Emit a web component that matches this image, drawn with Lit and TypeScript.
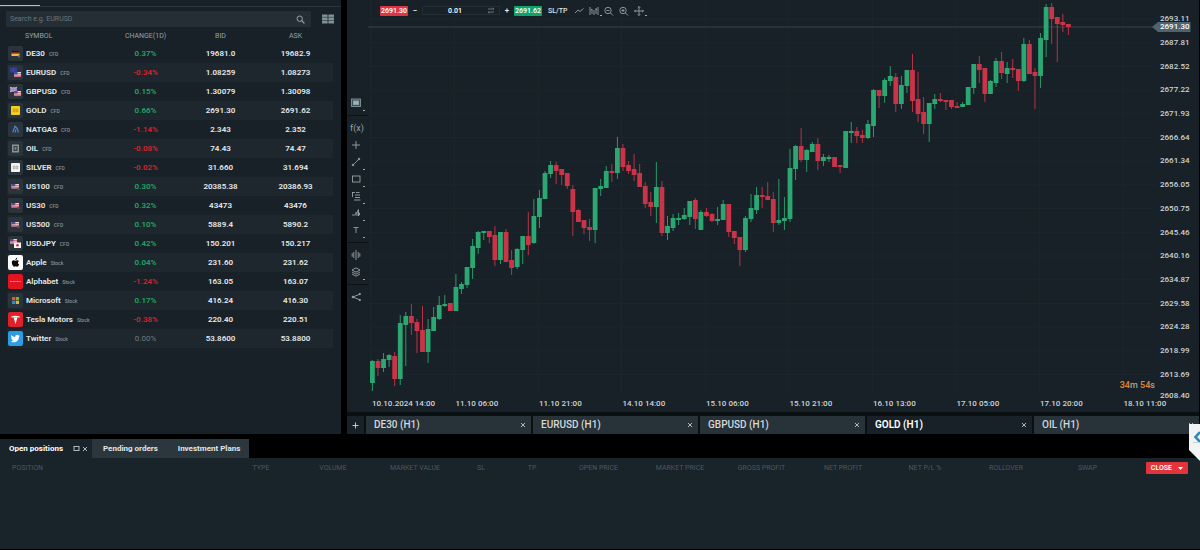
import { LitElement, html, svg, css, TemplateResult } from "lit";
import { customElement, state } from "lit/decorators.js";
import { classMap } from "lit/directives/class-map.js";

type Candle = [string, number, number, number, number];

// Hourly candles: direction, body top, body bottom, wick top, wick bottom.
const CANDLES: Candle[] = [
  ["g", 361, 383, 360, 391], ["r", 361, 368, 359, 376], ["g", 359, 368, 353, 372], ["g", 355, 360, 354, 367],
  ["r", 356, 379, 352, 386], ["g", 323, 379, 315, 385], ["g", 316, 325, 312, 366], ["r", 316, 323, 304, 335],
  ["r", 322, 331, 319, 353], ["r", 330, 352, 306, 352], ["g", 329, 352, 319, 363], ["g", 317, 331, 307, 331],
  ["g", 305, 319, 296, 320], ["g", 304, 306, 295, 307], ["r", 303, 311, 303, 311], ["g", 287, 311, 274, 311],
  ["g", 284, 289, 282, 294], ["g", 267, 285, 267, 288], ["g", 246, 268, 239, 279], ["g", 232, 248, 231, 254],
  ["g", 231, 233, 231, 240], ["r", 231, 237, 231, 243], ["r", 235, 260, 226, 266], ["g", 232, 260, 232, 264],
  ["r", 232, 262, 229, 262], ["r", 260, 268, 250, 275], ["g", 249, 267, 248, 269], ["g", 236, 250, 236, 264],
  ["r", 236, 245, 212, 255], ["g", 216, 243, 199, 244], ["g", 198, 217, 190, 228], ["g", 173, 199, 171, 199],
  ["g", 165, 174, 161, 178], ["r", 165, 171, 162, 184], ["r", 169, 175, 169, 185], ["r", 173, 186, 173, 189],
  ["r", 189, 212, 185, 236], ["r", 210, 222, 209, 222], ["r", 220, 228, 220, 234], ["r", 227, 230, 219, 241],
  ["g", 188, 230, 188, 243], ["g", 186, 189, 179, 196], ["g", 171, 188, 166, 188], ["r", 171, 173, 164, 182],
  ["g", 148, 173, 137, 179], ["r", 148, 167, 144, 171], ["r", 165, 171, 161, 174], ["r", 169, 175, 154, 181],
  ["r", 173, 187, 164, 187], ["r", 186, 204, 182, 208], ["r", 202, 207, 192, 216], ["g", 187, 207, 162, 223],
  ["r", 187, 233, 181, 236], ["g", 226, 233, 216, 240], ["g", 218, 228, 214, 231], ["g", 218, 220, 213, 225],
  ["g", 215, 219, 208, 220], ["g", 201, 217, 201, 225], ["r", 200, 219, 198, 229], ["g", 212, 230, 210, 230],
  ["r", 212, 216, 208, 217], ["r", 214, 221, 213, 222], ["g", 219, 221, 207, 225], ["g", 204, 220, 200, 220],
  ["r", 204, 232, 204, 237], ["r", 231, 238, 231, 244], ["r", 237, 250, 237, 266], ["g", 218, 250, 216, 252],
  ["g", 208, 219, 194, 222], ["g", 195, 210, 187, 214], ["r", 195, 197, 187, 208], ["r", 196, 200, 182, 200],
  ["r", 199, 223, 192, 232], ["g", 220, 223, 179, 225], ["g", 218, 221, 197, 230], ["g", 168, 219, 149, 222],
  ["g", 146, 169, 145, 180], ["r", 146, 160, 128, 162], ["g", 150, 160, 149, 172], ["g", 144, 152, 142, 152],
  ["r", 144, 161, 138, 170], ["g", 157, 161, 154, 166], ["g", 157, 159, 155, 162], ["r", 157, 167, 157, 167],
  ["r", 165, 167, 165, 173], ["g", 131, 168, 131, 168], ["g", 131, 133, 122, 143], ["r", 131, 136, 127, 143],
  ["r", 135, 138, 130, 143], ["g", 124, 138, 120, 139], ["g", 90, 126, 89, 137], ["r", 90, 96, 90, 108],
  ["g", 80, 96, 78, 103], ["g", 76, 81, 66, 86], ["r", 77, 104, 73, 112], ["g", 85, 104, 76, 109],
  ["g", 70, 86, 70, 93], ["r", 70, 101, 54, 112], ["r", 99, 114, 72, 122], ["r", 112, 124, 97, 134],
  ["g", 103, 124, 103, 142], ["g", 99, 104, 94, 109], ["r", 99, 101, 93, 102], ["r", 100, 102, 100, 110],
  ["r", 100, 107, 100, 109], ["r", 106, 108, 102, 108], ["g", 104, 107, 102, 107], ["g", 87, 105, 87, 105],
  ["g", 64, 88, 64, 94], ["r", 64, 70, 56, 83], ["r", 68, 94, 68, 102], ["g", 81, 94, 80, 94],
  ["g", 61, 83, 58, 87], ["r", 61, 73, 52, 79], ["g", 68, 74, 62, 83], ["r", 68, 70, 59, 78],
  ["r", 69, 81, 69, 91], ["g", 44, 81, 38, 82], ["r", 44, 74, 40, 74], ["r", 72, 76, 68, 109],
  ["g", 38, 76, 33, 88], ["g", 7, 40, 4, 57], ["r", 7, 19, 3, 44], ["r", 17, 24, 17, 62],
  ["r", 22, 25, 14, 32], ["r", 24, 27, 24, 35],
];

const STEP = 5.568;
const FIRST = 4.4;

const PRICES = [
  "2693.11", "2687.81", "2682.52", "2677.22", "2671.93", "2666.64", "2661.34", "2656.05", "2650.75",
  "2645.46", "2640.16", "2634.87", "2629.58", "2624.28", "2618.99", "2613.69",
];

const TIMES = [
  "10.10.2024 14:00", "11.10 06:00", "11.10 21:00", "14.10 14:00", "15.10 06:00",
  "15.10 21:00", "16.10 13:00", "17.10 05:00", "17.10 20:00", "18.10 11:00",
];

const usFlag = (x: number, y: number, w: number, h: number) => svg`
  <rect x=${x} y=${y} width=${w} height=${h} fill="#e9dfe6"/>
  <path d="M${x} ${y + 1.4}h${w}M${x} ${y + 3.2}h${w}M${x} ${y + h - 0.4}h${w}" stroke="#c8465a" stroke-width=".8"/>
  <rect x=${x} y=${y} width=${w / 2} height=${h / 2} fill="#4a4c94"/>`;

const box = "#2a343b";
const LOGOS: Record<string, { bg: string; art: TemplateResult }> = {
  de: { bg: box, art: svg`<path d="M4 5h7v2H4z" fill="#14161a"/><path d="M3.500 6.500h8v1.800h-8z" fill="#d8402e"/><path d="M3.500 8h8v2h-8z" fill="#f0b64a"/><circle cx="11" cy="10.500" r="1.200" fill="#55606a"/>` },
  eurusd: { bg: box, art: svg`<path d="M2 2.500h7v5H2z" fill="#343a9c"/><path d="M5.500 3.300v3.400M3.800 5h3.400" stroke="#5d5fae" stroke-width=".7" stroke-dasharray=".8 .8"/>${usFlag(6, 7, 7, 5)}` },
  gbpusd: { bg: box, art: svg`<path d="M2 3h7v5H2z" fill="#8a7cb4"/><path d="M2 3l7 5M9 3l-7 5" stroke="#d3c2d8" stroke-width=".9"/><path d="M5.500 3v5M2 5.500h7" stroke="#cf7f9c" stroke-width="1.200"/>${usFlag(6, 7, 7, 5)}` },
  gold: { bg: box, art: svg`<rect x="3" y="3" width="9" height="9" rx=".8" fill="#f3cf1d"/><path d="M5.200 6.200h1.800v2.400H5.200zM8.200 6.200h1.600v2.400H8.200z" fill="none" stroke="#b48c12" stroke-width=".7"/>` },
  gas: { bg: box, art: svg`<path d="M5 10.500C4.700 7.800 6.600 7.200 7 4.300c2 1.600 3.400 3.700 3 6.200M7.500 10.500c-.4-1.500.2-2.300.3-3" fill="none" stroke="#4d83c8" stroke-width="1.300"/>` },
  oil: { bg: box, art: svg`<rect x="4" y="3.500" width="7" height="8" fill="#8b9397"/><rect x="5.500" y="5" width="4" height="5" fill="#343d43"/><rect x="6.600" y="6.200" width="1.800" height="2.400" fill="#8b9397"/>` },
  silver: { bg: box, art: svg`<rect x="3" y="3" width="9" height="9" rx=".8" fill="#f1f1ef"/><path d="M5.200 6.200h1.800v2.400H5.200zM8.200 6.200h1.600v2.400H8.200z" fill="none" stroke="#9b9b98" stroke-width=".7"/>` },
  us: { bg: box, art: svg`${usFlag(3.5, 5, 7.5, 4.5)}<circle cx="10.500" cy="10" r="1.300" fill="#6b4a50"/>` },
  usdjpy: { bg: box, art: svg`${usFlag(2, 3, 7, 5)}<path d="M6 6.500h7v5.500H6z" fill="#f4f1f2"/><circle cx="9.500" cy="9.200" r="1.300" fill="#cf2f3c"/>` },
  apple: { bg: "#fcfcfc", art: svg`<path d="M9.300 5.200c-.8 0-1.200.5-1.800.5s-1.100-.5-1.900-.4C4.600 5.400 3.800 6.200 3.800 7.600c0 1.900 1.300 4.100 2.300 4.100.6 0 .8-.4 1.500-.4s.9.400 1.500.4c.9 0 1.700-1.500 2-2.300-1.500-.7-1.500-2.700-.1-3.400-.4-.5-1-.8-1.700-.8zM7.400 5c0-1.200.8-2 1.800-2.200C9.300 4 8.500 4.900 7.400 5z" fill="#0b0b0c"/>` },
  alphabet: { bg: "#e3131f", art: svg`<path d="M2 7.500h11" stroke="#f59aa0" stroke-width="1.200" stroke-dasharray="1 .4"/>` },
  microsoft: { bg: box, art: svg`<path d="M4 4h3.200v3.200H4z" fill="#d95a33"/><path d="M7.800 4H11v3.200H7.800z" fill="#7cae35"/><path d="M4 7.800h3.200V11H4z" fill="#2b8ec9"/><path d="M7.800 7.800H11V11H7.800z" fill="#e6b12c"/>` },
  tesla: { bg: "#e0202a", art: svg`<path d="M3.200 4.400c2.600-1 6-1 8.600 0l-.5 1.300c-.7-.3-1.200-.4-1.900-.4L7.500 12.200 5.600 5.300c-.7 0-1.200.1-1.900.4z" fill="#fff"/><path d="M6.700 5.200l.8.900.8-.9" fill="none" stroke="#e0202a" stroke-width=".6"/>` },
  twitter: { bg: "#2b9de3", art: svg`<path d="M12 4.700c-.3.200-.7.300-1.100.3.400-.2.700-.6.800-1-.4.200-.8.400-1.200.4a1.900 1.900 0 0 0-3.200 1.700C5.700 6 4.300 5.300 3.400 4.100c-.5.900-.3 2 .6 2.500-.3 0-.6-.1-.9-.2 0 .9.700 1.700 1.500 1.900-.3.100-.6.100-.8 0 .2.800.9 1.300 1.700 1.300-.8.600-1.700.9-2.700.8 3.300 2.100 8.200.4 8.200-4.600.4-.3.700-.6 1-1.100z" fill="#fff"/>` },
};

interface Quote { logo: string; name: string; kind: string; change: string; bid: string; ask: string; }
const q = (logo: string, name: string, kind: string, change: string, bid: string, ask: string): Quote =>
  ({ logo, name, kind, change, bid, ask });

const QUOTES: Quote[] = [
  q("de", "DE30", "CFD", "0.37%", "19681.0", "19682.9"),
  q("eurusd", "EURUSD", "CFD", "-0.34%", "1.08259", "1.08273"),
  q("gbpusd", "GBPUSD", "CFD", "0.15%", "1.30079", "1.30098"),
  q("gold", "GOLD", "CFD", "0.66%", "2691.30", "2691.62"),
  q("gas", "NATGAS", "CFD", "-1.14%", "2.343", "2.352"),
  q("oil", "OIL", "CFD", "-0.08%", "74.43", "74.47"),
  q("silver", "SILVER", "CFD", "-0.02%", "31.660", "31.694"),
  q("us", "US100", "CFD", "0.30%", "20385.38", "20386.93"),
  q("us", "US30", "CFD", "0.32%", "43473", "43476"),
  q("us", "US500", "CFD", "0.10%", "5889.4", "5890.2"),
  q("usdjpy", "USDJPY", "CFD", "0.42%", "150.201", "150.217"),
  q("apple", "Apple", "Stock", "0.04%", "231.60", "231.62"),
  q("alphabet", "Alphabet", "Stock", "-1.24%", "163.05", "163.07"),
  q("microsoft", "Microsoft", "Stock", "0.17%", "416.24", "416.30"),
  q("tesla", "Tesla Motors", "Stock", "-0.38%", "220.40", "220.51"),
  q("twitter", "Twitter", "Stock", "0.00%", "53.8600", "53.8800"),
];

@customElement("watch-list")
export class WatchList extends LitElement {
  static styles = css`
    :host { display: flex; flex-direction: column; background: #172127; color: #e6eaec; }
    .tabs { height: 7px; border-bottom: 1px solid #2b353b; box-sizing: border-box; }
    .current { width: 40px; height: 6px; border-bottom: 1px solid #b4babd; box-sizing: border-box; }
    .find { display: flex; align-items: center; gap: 11px; padding: 4px 7px 0 6px; }
    .search { flex: 1; display: flex; align-items: center; height: 16px; background: #252e34; padding-right: 6px; }
    .search input { flex: 1; min-width: 0; border: 0; background: none; outline: none; padding: 0 4px; font: 7px Roboto, sans-serif; color: #dde2e4; }
    .search input::placeholder { color: #6c767c; opacity: 1; }
    button { border: 0; background: none; padding: 0; display: flex; }
    table { border-collapse: collapse; table-layout: fixed; width: 326px; margin: 1px 8px 0 7px; }
    th { height: 16px; padding: 0; font-size: 7px; font-weight: 400; color: #98a1a6; text-align: center; }
    th:first-child { width: 31%; text-align: left; text-indent: 18px; }
    td { height: 19px; padding: 0; font-size: 8px; font-weight: 600; text-align: center; }
    td:first-child { text-align: left; }
    tbody tr:nth-child(even) { background: #1e272d; }
    .sym { display: flex; align-items: center; padding-left: 1px; }
    .logo { flex: none; margin-right: 3px; }
    .kind { font-size: 5px; font-weight: 500; color: #87929a; margin-left: 4px; }
    .up { color: #21a565; }
    .down { color: #d5242f; }
    .flat { color: #6f797f; font-weight: 400; }
  `;

  render() {
    return html`
      <div class="tabs"><div class="current"></div></div>
      <div class="find">
        <label class="search">
          <input type="text" aria-label="Search" placeholder="Search e.g. EURUSD" />
          <svg width="9" height="9" viewBox="0 0 9 9" fill="none" stroke="#9aa3a8"><circle cx="3.700" cy="3.700" r="2.700"/><path d="M5.700 5.700L8.400 8.400" stroke-width="1.300"/></svg>
        </label>
        <button aria-label="Tile view">
          <svg width="12" height="10" viewBox="0 0 12 10"><path d="M0 .5h5.600v9H0zM6.400.5H12v9H6.400z" fill="#7f9097"/><path d="M0 3.300h12M0 6.500h12" stroke="#34434b" stroke-width=".7"/></svg>
        </button>
      </div>
      <table>
        <thead><tr><th>SYMBOL</th><th>CHANGE(1D)</th><th>BID</th><th>ASK</th></tr></thead>
        <tbody>
          ${QUOTES.map((r) => html`<tr>
            <td><div class="sym">
              <svg class="logo" width="15" height="15" viewBox="0 0 15 15"><rect width="15" height="15" rx="2" fill=${LOGOS[r.logo].bg}/>${LOGOS[r.logo].art}</svg>
              ${r.name}<span class="kind">${r.kind}</span></div></td>
            <td class=${r.change === "0.00%" ? "flat" : r.change.startsWith("-") ? "down" : "up"}>${r.change}</td>
            <td>${r.bid}</td><td>${r.ask}</td>
          </tr>`)}
        </tbody>
      </table>`;
  }
}

interface Tool { label: string; art: TemplateResult; more?: boolean; gap?: boolean; }
const TOOLS: Tool[] = [
  { label: "Chart type", more: true, art: svg`<rect x="1.500" y="2" width="9" height="7.500" fill="#3b525b" stroke="#7f949c"/><rect x="3.500" y="4" width="5" height="3.500" fill="#9fb0b6"/>` },
  { label: "Indicators", gap: true, art: svg`<text x="0" y="9" font-size="9" fill="#98a2a7" stroke="none">f(x)</text>` },
  { label: "Crosshair", art: svg`<path d="M6 2v8M2 6h8"/>` },
  { label: "Trend line", more: true, art: svg`<path d="M3 9l6-6"/><circle cx="3" cy="9" r=".8" fill="#98a2a7"/><circle cx="9" cy="3" r=".8" fill="#98a2a7"/>` },
  { label: "Rectangle", more: true, art: svg`<rect x="2.500" y="3" width="7.500" height="6"/>` },
  { label: "Fibonacci", more: true, art: svg`<path d="M2 2.500h3M2.500 2v5M5 5h5M5 7.500h5M4 10h6.500M6 2.500h3.500"/>` },
  { label: "Shapes", more: true, art: svg`<path d="M2 8h3.500L8.500 2.500V9M5 6h4.500V8H6"/>` },
  { label: "Text", more: true, art: svg`<path d="M3.500 3.500h5M6 3.500V9"/>` },
  { label: "Objects", gap: true, art: svg`<path d="M6 1v10M3.800 3v6M8.200 3v6M2.200 4.200v3.600M9.800 4.200v3.600"/>` },
  { label: "Layers", more: true, art: svg`<path d="M6 1.800L10 4 6 6.200 2 4z"/><path d="M2 6l4 2.200L10 6M2 8l4 2.200L10 8"/>` },
  { label: "Share", gap: true, art: svg`<path d="M10 3L3 6l7 3"/><circle cx="3" cy="6" r=".9" fill="#98a2a7"/><circle cx="9.800" cy="3" r=".7" fill="#98a2a7"/><circle cx="9.800" cy="9" r=".7" fill="#98a2a7"/>` },
];

const TOP_TOOLS: Tool[] = [
  { label: "Line chart", art: svg`<path d="M2 8l3-3 2 1.500L10.500 3.500"/>` },
  { label: "Candles", more: true, art: svg`<path d="M2 2v8M10 2v8M4 4v5M8 3v6M6 5v5M3 4.500h1M8 4.500h1"/>` },
  { label: "Zoom out", art: svg`<circle cx="5" cy="5.500" r="3.200"/><path d="M7.400 7.900L10 10.500M3.500 5.500h3"/>` },
  { label: "Zoom in", art: svg`<circle cx="5" cy="5.500" r="3.200"/><path d="M7.400 7.900L10 10.500M3.500 5.500h3M5 4v3"/>` },
  { label: "Move", more: true, art: svg`<path d="M6 1.500v9M1.500 6h9M4.800 2.700L6 1.500l1.200 1.200M4.800 9.300L6 10.500l1.200-1.200M2.700 4.800L1.500 6l1.200 1.200M9.300 4.800L10.500 6 9.300 7.200"/>` },
];

@customElement("price-chart")
export class PriceChart extends LitElement {
  @state() private active = 3;

  static styles = css`
    :host { display: flex; flex-direction: column; min-width: 0; }
    button { border: 0; background: none; padding: 0; margin: 0; font: inherit; color: inherit; }
    .frame { flex: 1; min-height: 0; display: grid; grid-template: minmax(0, 1fr) 18px / 21px minmax(0, 1fr) 44px; background: #172127; }
    .tools { grid-area: 1 / 1 / 3 / 2; display: flex; flex-direction: column; padding-top: 94px; }
    .tool { position: relative; height: 17px; padding-left: 3px; display: flex; align-items: center; justify-content: flex-start; }
    .tool.gap { margin-top: 8px; }
    .tool.gap::before { content: ""; position: absolute; left: 0; right: 0; top: -4px; border-top: 1px solid #0c1216; }
    .more::after { content: ""; position: absolute; right: 3px; bottom: 0; width: 2px; height: 1px; background: #a0aaaf; }
    .icon { fill: none; stroke: #98a2a7; stroke-width: .9; overflow: visible; }
    .plot { grid-area: 1 / 2; width: 100%; height: 100%; overflow: hidden; }
    .trade { grid-area: 1 / 2; align-self: start; z-index: 1; display: flex; align-items: center; padding: 5px 0 0 12px; font-size: 7px; color: #dfe4e6; }
    .quote { width: 28px; height: 10px; border-radius: 1px; font-weight: 600; text-align: center; line-height: 10px; color: #fff; }
    .sell { background: #dc3545; }
    .buy { background: #0fa36b; }
    .step { width: 14px; font-size: 8px; font-weight: 700; text-align: center; line-height: 10px; }
    .volume { display: flex; align-items: center; width: 78px; height: 9px; border: 1px solid #232e34; box-sizing: border-box; }
    .volume input { width: 64px; border: 0; padding: 0; background: none; outline: none; font: 600 7px Roboto, sans-serif; color: #fff; text-align: center; }
    .sltp { margin: 0 6px; font-weight: 500; }
    .top-tool { position: relative; display: flex; padding: 0 3px 0 0; height: 11px; }
    .top-tool.more::after { right: 1px; }
    .axis { grid-area: 1 / 3 / 3 / 4; position: relative; display: flex; flex-direction: column; padding: 7px 0 7px 5px; font-size: 8px; font-weight: 500; color: #cfd4d6; }
    .price { flex: 1; display: flex; align-items: center; }
    .price.last { flex: none; height: 19px; }
    .tag { position: absolute; left: -3px; top: 22px; padding: 0 1px 0 8px; line-height: 10px; background: #4f626d; color: #fff; clip-path: polygon(0 50%, 6px 0, 100% 0, 100% 100%, 6px 100%); }
    .left { grid-area: 1 / 2; align-self: end; justify-self: end; z-index: 1; font-size: 9px; line-height: 10px; margin-bottom: 4px; font-weight: 500; color: #9ba5aa; }
    .left b { color: #e0842a; font-weight: 600; }
    .times { grid-area: 2 / 2 / 3 / 4; display: grid; grid-template-columns: repeat(10, minmax(0, 1fr)); align-items: center; padding: 1px 0 0 4px; margin-right: -8px; font-size: 8px; line-height: 10px; font-weight: 500; color: #cfd4d6; white-space: nowrap; }
    .tabs { display: flex; gap: 2px; padding-top: 4px; background: #0a0f12; }
    .add { width: 17px; height: 18px; background: #172127; display: grid; place-items: center; }
    .tab { flex: 1; display: flex; align-items: center; justify-content: space-between; padding: 0 4px 0 8px; height: 18px; background: #283239; color: #d3d8da; font-size: 10px; font-weight: 500; }
    .tab.on { background: #172127; color: #fff; font-weight: 600; }
    .pick { flex: 1; text-align: left; line-height: 18px; }
    .x { width: 8px; height: 8px; display: grid; place-items: center; }
  `;

  private tool(t: Tool, cls: string) {
    return html`<button class=${classMap({ [cls]: true, more: !!t.more, gap: !!t.gap })} aria-label=${t.label}>
      <svg class="icon" width="12" height="12" viewBox="0 0 12 12">${t.art}</svg></button>`;
  }

  render() {
    const names = ["DE30 (H1)", "EURUSD (H1)", "GBPUSD (H1)", "GOLD (H1)", "OIL (H1)"];
    return html`
      <div class="frame">
        <div class="tools">${TOOLS.map((t) => this.tool(t, "tool"))}</div>
        <svg class="plot" viewBox="0 0 787 394" preserveAspectRatio="none" role="img" aria-label="GOLD H1 candles">
          ${PRICES.map((_, i) => svg`<path d="M0 ${19 + i * 23.7}H787" stroke="#1c272d"/>`)}
          ${TIMES.map((_, i) => svg`<path d="M${3 + i * 83.55} 0V394" stroke="#1c272d"/>`)}
          <path d="M0 27H787" stroke="#37454c"/>
          ${CANDLES.map(([dir, top, bottom, high, low], i) => {
            const x = FIRST + i * STEP;
            const fill = dir === "g" ? "#2ba771" : "#cb3448";
            return svg`<path d="M${x} ${high}V${low}" stroke=${fill} stroke-width=".9"/>
              <rect x=${x - 2.4} y=${top} width="4.800" height=${bottom - top} fill=${fill}/>`;
          })}
        </svg>
        <div class="trade">
          <button class="quote sell">2691.30</button>
          <button class="step" aria-label="Less">−</button>
          <div class="volume">
            <input type="text" aria-label="Volume" value="0.01" />
            <svg width="8" height="7" viewBox="0 0 8 7" fill="none" stroke="#7f8a90" stroke-width=".8"><path d="M1 2h6L5.500.8M7 5H1l1.500 1.200"/></svg>
          </div>
          <button class="step" aria-label="More">+</button>
          <button class="quote buy">2691.62</button>
          <button class="sltp">SL/TP</button>
          ${TOP_TOOLS.map((t) => this.tool(t, "top-tool"))}
        </div>
        <div class="left"><b>34</b>m <b>54</b>s</div>
        <div class="axis">
          ${PRICES.map((p) => html`<div class="price">${p}</div>`)}
          <div class="price last">2608.40</div>
          <div class="tag">2691.30</div>
        </div>
        <div class="times">${TIMES.map((t) => html`<span>${t}</span>`)}</div>
      </div>
      <div class="tabs">
        <button class="add" aria-label="Add chart"><svg width="7" height="7" viewBox="0 0 7 7"><path d="M3.500.5v6M.5 3.500h6" stroke="#d3d8da" stroke-width=".9"/></svg></button>
        ${names.map((n, i) => html`<div class=${classMap({ tab: true, on: i === this.active })}>
          <button class="pick" @click=${() => (this.active = i)}>${n}</button>
          <button class="x" aria-label="Close ${n}"><svg width="6" height="6" viewBox="0 0 6 6"><path d="M1 1l4 4M5 1L1 5" stroke="#c3c9cc" stroke-width=".9"/></svg></button>
        </div>`)}
      </div>`;
  }
}

const COLUMNS: [string, number][] = [
  ["POSITION", 225], ["TYPE", 72], ["VOLUME", 72], ["MARKET VALUE", 92], ["SL", 40], ["TP", 62],
  ["OPEN PRICE", 71], ["MARKET PRICE", 92], ["GROSS PROFIT", 71], ["NET PROFIT", 92],
  ["NET P/L %", 72], ["ROLLOVER", 90], ["SWAP", 73],
];

@customElement("positions-panel")
export class PositionsPanel extends LitElement {
  static styles = css`
    :host { display: block; padding-top: 5px; }
    button { border: 0; background: none; padding: 0; margin: 0; font: inherit; color: inherit; }
    .tabs { display: flex; height: 19px; font-size: 8px; font-weight: 700; color: #e2e6e8; }
    .tab { display: flex; align-items: center; background: #2b363d; padding: 0 9px 0 11px; }
    .tab.on { background: #18232a; padding: 0 4px 0 9px; color: #fff; }
    .tab.on svg { margin-left: 2px; }
    .tab.on .max { margin-left: 10px; }
    .body { background: #18232a; min-height: 91px; margin-bottom: 1px; }
    table { width: 100%; border-collapse: collapse; table-layout: fixed; }
    th { height: 20px; padding: 0; font-size: 7px; font-weight: 400; color: #4d585f; white-space: nowrap; text-align: center; }
    th:first-child { text-align: left; text-indent: 12px; }
    th:last-child { text-align: right; padding-right: 12px; }
    .close { display: inline-flex; align-items: center; gap: 6px; height: 12px; padding: 0 5px; border-radius: 1px; background: #e2353b; color: #fff; font-weight: 600; }
  `;

  render() {
    return html`
      <div class="tabs">
        <button class="tab on">Open positions
          <svg class="max" width="7" height="7" viewBox="0 0 7 7"><rect x="1" y="1.500" width="5" height="4" fill="none" stroke="#c3c9cc" stroke-width=".9"/></svg>
          <svg width="6" height="6" viewBox="0 0 6 6"><path d="M1 1l4 4M5 1L1 5" stroke="#c3c9cc" stroke-width=".9"/></svg>
        </button>
        <button class="tab">Pending orders</button>
        <button class="tab">Investment Plans</button>
      </div>
      <div class="body">
        <table>
          <colgroup>${COLUMNS.map(([, w]) => html`<col style="width:${w / 12}%" />`)}<col /></colgroup>
          <thead><tr>
            ${COLUMNS.map(([name]) => html`<th>${name}</th>`)}
            <th><button class="close">CLOSE <svg width="5" height="3" viewBox="0 0 5 3"><path d="M0 0h5L2.500 3z" fill="#fff"/></svg></button></th>
          </tr></thead>
        </table>
      </div>`;
  }
}

@customElement("app-root")
export class AppRoot extends LitElement {
  static styles = css`
    :host { display: flex; flex-direction: column; min-height: 100vh; position: relative; overflow: hidden; background: #000; font-family: Roboto, sans-serif; }
    .top { flex: 1; display: grid; grid-template-columns: 341px minmax(0, 1fr); column-gap: 6px; padding-right: 1px; }
    .help { position: absolute; right: 0; bottom: 89px; width: 11px; height: 37px; border: 0; padding: 0; background: #f2f3f5; clip-path: polygon(0 0, 100% 0, 100% 100%, 0 70%); display: flex; align-items: flex-start; z-index: 2; }
  `;

  render() {
    return html`
      <div class="top">
        <watch-list></watch-list>
        <price-chart></price-chart>
      </div>
      <positions-panel></positions-panel>
      <button class="help" aria-label="Open side panel">
        <svg width="11" height="26" viewBox="0 0 11 26" fill="none"><path d="M11 8L6.500 13l4.500 5" stroke="#2f86b8" stroke-width="2.600"/><path d="M4 18.500h5" stroke="#b9c9d3" stroke-width=".8"/></svg>
      </button>`;
  }
}
